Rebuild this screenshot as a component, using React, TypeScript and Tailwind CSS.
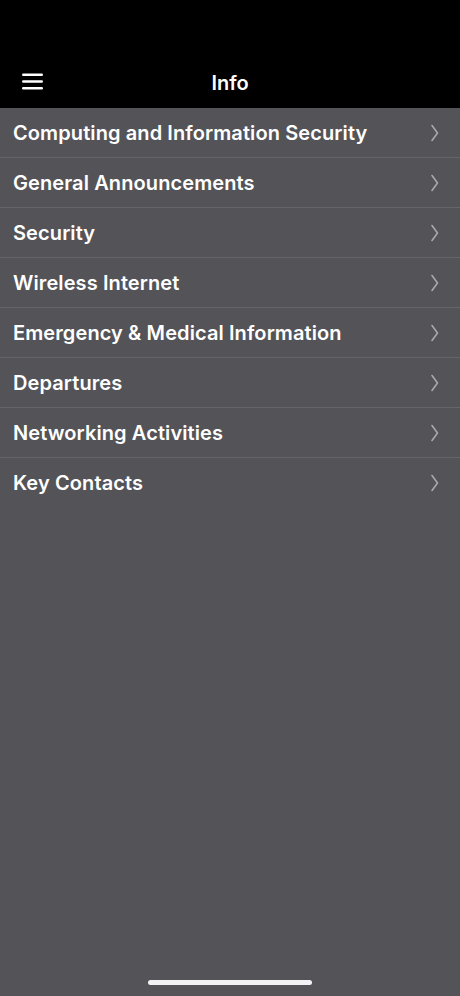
import React from 'react';

const items = [
  'Computing and Information Security',
  'General Announcements',
  'Security',
  'Wireless Internet',
  'Emergency & Medical Information',
  'Departures',
  'Networking Activities',
  'Key Contacts',
];

function Chevron() {
  return (
    <svg width="10" height="18" viewBox="0 0 10 18" fill="none">
      <path d="M2 1.5 L7.5 9 L2 16.5" stroke="#a8a8ad" strokeWidth="1.6" strokeLinecap="round" strokeLinejoin="round" />
    </svg>
  );
}

export default function App() {
  return (
    <div className="w-[460px] h-[996px] flex flex-col bg-[#535358] overflow-hidden font-['Inter',sans-serif]">
      {/* Header */}
      <div className="h-[108px] bg-black flex flex-col justify-end">
        <div className="h-[58px] flex items-center px-[22px] pt-[4px] relative">
          <svg width="21" height="17" viewBox="0 0 21 17">
            <rect x="0" y="0.5" width="21" height="2.6" rx="1.3" fill="#fff" />
            <rect x="0" y="7.2" width="21" height="2.6" rx="1.3" fill="#fff" />
            <rect x="0" y="13.9" width="21" height="2.6" rx="1.3" fill="#fff" />
          </svg>
          <span className="absolute left-0 right-0 pt-[4px] text-center text-white text-[20px] font-semibold pointer-events-none">
            Info
          </span>
        </div>
      </div>

      {/* List */}
      <div className="flex flex-col">
        {items.map((label, i) => (
          <div
            key={label}
            className={`h-[50px] flex items-center justify-between pl-[13px] pr-[20px] ${
              i < items.length - 1 ? 'border-b border-[#646469]' : ''
            }`}
          >
            <span className="text-white text-[20px] font-semibold tracking-[0.1px]">{label}</span>
            <Chevron />
          </div>
        ))}
      </div>

      <div className="flex-1" />

      {/* Home indicator */}
      <div className="h-[16px] flex justify-center">
        <div className="w-[164px] h-[5px] rounded-full bg-[#f2f2f4]" />
      </div>
    </div>
  );
}
